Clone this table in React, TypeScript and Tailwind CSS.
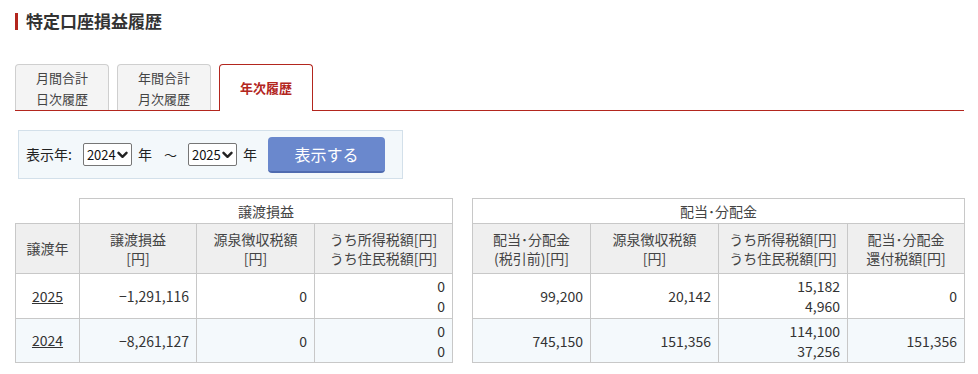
import React from "react";

const F = { fontFamily: '"Noto Sans CJK JP", "Noto Sans", sans-serif' };

function Chevron() {
  return (
    <svg width="11" height="8" viewBox="0 0 11 8" className="shrink-0">
      <path d="M1.5 1.8 L5.5 5.8 L9.5 1.8" fill="none" stroke="#222" strokeWidth="2.4" strokeLinecap="round" strokeLinejoin="round" />
    </svg>
  );
}

function YearSelect({ value }: { value: string }) {
  return (
    <div className="flex h-[23px] w-[49px] items-center justify-between rounded-[2px] border border-[#767676] bg-white pl-[3px] pr-[3px] text-[13px] leading-none text-[#111]">
      <span>{value}</span>
      <Chevron />
    </div>
  );
}

function Tab({ l1, l2, active }: { l1: string; l2?: string; active?: boolean }) {
  if (active) {
    return (
      <div className="relative z-10 -mb-px flex h-[47px] w-[94px] items-center justify-center rounded-t-[4px] border border-b-0 border-[#b3261e] bg-white text-[13px] font-bold text-[#b3261e]">
        {l1}
      </div>
    );
  }
  return (
    <div className="flex h-[46px] w-[94px] flex-col items-center justify-center rounded-t-[4px] border border-b-0 border-[#cfcfcf] bg-[#f4f4f4] text-[13px] leading-[21px] text-[#444]">
      <span>{l1}</span>
      <span>{l2}</span>
    </div>
  );
}

const th = "border border-[#c8c8c8] bg-[#efefef] text-center align-middle font-normal text-[14px] leading-[19px] text-[#444]";
const td = "border border-[#c8c8c8] text-right align-middle text-[14px] leading-[20px] text-[#333] pr-[7px]";

export default function App() {
  const rows = [
    { y: "2025", a: "−1,291,116", b: "0", c1: "0", c2: "0", d: "99,200", e: "20,142", f1: "15,182", f2: "4,960", g: "0", bg: "bg-white" },
    { y: "2024", a: "−8,261,127", b: "0", c1: "0", c2: "0", d: "745,150", e: "151,356", f1: "114,100", f2: "37,256", g: "151,356", bg: "bg-[#f4f9fc]" },
  ];
  return (
    <div style={F} className="w-[978px] h-[374px] bg-white pl-[15px] pt-[12px] text-[#333]">
      <div className="flex items-center gap-[8px]">
        <div className="h-[17px] w-[3px] bg-[#b3261e]" />
        <h1 className="text-[17px] font-bold leading-[18px] text-[#333]">特定口座損益履歴</h1>
      </div>

      <div className="mt-[34px] w-[949px]">
        <div className="flex items-end gap-[8px] border-b border-[#b3261e]">
          <Tab l1="月間合計" l2="日次履歴" />
          <Tab l1="年間合計" l2="月次履歴" />
          <Tab l1="年次履歴" active />
        </div>
      </div>

      <div className="ml-[3px] mt-[19px] flex h-[49px] w-[385px] items-center border border-[#d3e0ea] bg-[#f3f8fb] pl-[7px] text-[14px] text-[#222]">
        <span>表示年:</span>
        <span className="ml-[11px]"><YearSelect value="2024" /></span>
        <span className="ml-[6px]">年</span>
        <span className="ml-[12px] text-[13px]">～</span>
        <span className="ml-[11px]"><YearSelect value="2025" /></span>
        <span className="ml-[6px]">年</span>
        <button className="ml-[11px] h-[36px] w-[117px] rounded-[4px] border-b-2 border-[#4f6bb0] bg-[#6a88cd] text-[16px] text-white">
          表示する
        </button>
      </div>

      <div className="mt-[19px] flex gap-[19px]">
        <table className="w-[437px] table-fixed border-collapse">
          <colgroup>
            <col className="w-[64px]" />
            <col className="w-[117px]" />
            <col className="w-[118px]" />
            <col className="w-[138px]" />
          </colgroup>
          <thead>
            <tr className="h-[25px]">
              <th className="border-0 bg-white"></th>
              <th colSpan={3} className="border border-[#c8c8c8] bg-white text-center text-[14px] font-normal text-[#444]">譲渡損益</th>
            </tr>
            <tr className="h-[50px]">
              <th className={th}>譲渡年</th>
              <th className={th}>譲渡損益<br />[円]</th>
              <th className={th}>源泉徴収税額<br />[円]</th>
              <th className={th}>うち所得税額[円]<br />うち住民税額[円]</th>
            </tr>
          </thead>
          <tbody>
            {rows.map((r, i) => (
              <tr key={r.y} className={`${i === 0 ? "h-[45px]" : "h-[44px]"} ${r.bg}`}>
                <td className="border border-[#c8c8c8] text-center align-middle text-[14px] text-[#333]">
                  <a href="#" className="underline">{r.y}</a>
                </td>
                <td className={td}>{r.a}</td>
                <td className={td}>{r.b}</td>
                <td className={td}>{r.c1}<br />{r.c2}</td>
              </tr>
            ))}
          </tbody>
        </table>

        <table className="w-[492px] table-fixed border-collapse">
          <colgroup>
            <col className="w-[118px]" />
            <col className="w-[128px]" />
            <col className="w-[129px]" />
            <col className="w-[117px]" />
          </colgroup>
          <thead>
            <tr className="h-[25px]">
              <th colSpan={4} className="border border-[#c8c8c8] bg-white text-center text-[14px] font-normal text-[#444]">配当･分配金</th>
            </tr>
            <tr className="h-[50px]">
              <th className={th}>配当･分配金<br />(税引前)[円]</th>
              <th className={th}>源泉徴収税額<br />[円]</th>
              <th className={th}>うち所得税額[円]<br />うち住民税額[円]</th>
              <th className={th}>配当･分配金<br />還付税額[円]</th>
            </tr>
          </thead>
          <tbody>
            {rows.map((r, i) => (
              <tr key={r.y} className={`${i === 0 ? "h-[45px]" : "h-[44px]"} ${r.bg}`}>
                <td className={td}>{r.d}</td>
                <td className={td}>{r.e}</td>
                <td className={td}>{r.f1}<br />{r.f2}</td>
                <td className={td}>{r.g}</td>
              </tr>
            ))}
          </tbody>
        </table>
      </div>
    </div>
  );
}
